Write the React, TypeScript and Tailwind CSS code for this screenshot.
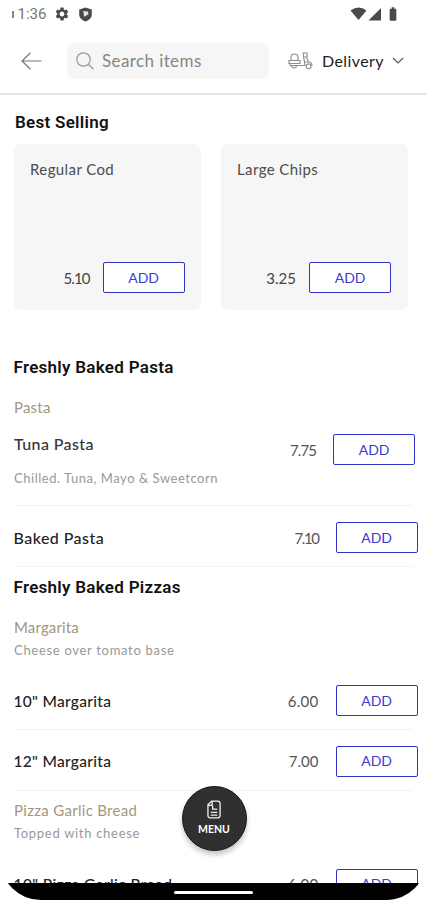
import React from "react";
import { MdSettings, MdBatteryFull } from "react-icons/md";

const AddButton = () => (
  <button className="flex h-[31px] w-[82px] shrink-0 items-center justify-center rounded-[2px] border-[1.5px] border-[#3032c8] bg-white text-[14px] leading-none tracking-[-0.1px] text-[#3a3cd0]">
    ADD
  </button>
);

const Card = ({ name, price, pad, priceClass }: { name: string; price: string; pad: string; priceClass: string }) => (
  <div className={`flex h-[166px] w-[187px] flex-col justify-between rounded-[7px] bg-[#f6f6f6] pt-[15px] pb-[17px] ${pad}`}>
    <div className="text-[15px] leading-[20px] tracking-[0.4px] text-[#4c4c4c]">{name}</div>
    <div className="flex items-center justify-end gap-[13px]">
      <span className={`text-[15px] leading-5 text-[#444] ${priceClass}`}>{price}</span>
      <AddButton />
    </div>
  </div>
);

const Heading = ({ children, className = "" }: { children: React.ReactNode; className?: string }) => (
  <h2 className={`font-['Roboto',sans-serif] text-[17px] leading-[20px] font-semibold tracking-[0.28px] text-[#111] ${className}`}>{children}</h2>
);

const Category = ({ children, className }: { children: React.ReactNode; className: string }) => (
  <h3 className={`text-[15px] leading-[20px] text-[#a3977b] ${className}`}>{children}</h3>
);

const Item = ({
  name,
  price,
  className,
  nameClass,
  priceClass = "",
}: {
  name: string;
  price: string;
  className: string;
  nameClass: string;
  priceClass?: string;
}) => (
  <div className={`ml-[13.500px] flex shrink-0 items-center ${className}`}>
    <span className={`flex-1 leading-5 font-medium text-[#222] ${nameClass}`}>{name}</span>
    <span className={`mr-[17px] text-[15px] leading-5 text-[#555] ${priceClass}`}>{price}</span>
    <AddButton />
  </div>
);

export default function App() {
  return (
    <div className="relative flex h-[900px] w-[427px] flex-col overflow-hidden rounded-b-[41px] bg-white font-['Lato',sans-serif]">
      <div className="flex h-7 shrink-0 items-center pl-[12px] font-['Roboto',sans-serif] text-[15px] text-[#777]">
        <span className="mr-[4px] h-[7px] w-[1.5px] bg-[#888]" />
        <span className="w-[29px]">1:36</span>
        <MdSettings className="ml-[7px] size-[16px] text-[#4a4a4a]" />
        <svg className="ml-[8px] size-[15px]" viewBox="0 0 15 15">
          <path d="M7.500 .5 13.800 2.500v5.100c0 3.400-2.500 5.700-6.300 7C3.700 13.300 1.200 11 1.200 7.600V2.500z" fill="#4a4a4a" />
          <path d="M5.300 4 9.800 4.600 10.500 7.200 6 9.800z" fill="#e5e5e5" />
        </svg>
        <svg className="ml-auto h-[14px] w-[35px]" viewBox="0 0 35 14">
          <path d="M.5 3.500Q8.500-2.500 16.500 3.500L8.500 13z" fill="#4a4a4a" />
          <path d="M18.500 13.500H31V1z" fill="#4a4a4a" />
        </svg>
        <MdBatteryFull className="mr-[26px] size-[16px] text-[#4a4a4a]" />
      </div>

      <header className="flex h-[67px] shrink-0 items-center border-b-2 border-[#e6e6e6] pl-[21px]">
        <svg className="h-[18px] w-[21px]" viewBox="0 0 21 18" fill="none" stroke="#777" strokeWidth="1.200">
          <path d="M20.500 9H1M9.500 .7 1 9l8.500 8.300" />
        </svg>
        <div className="ml-[25px] flex h-9 w-[202px] items-center rounded-[7px] bg-[#f6f6f6] pl-[9px]">
          <svg className="size-[18px]" viewBox="0 0 18 18" fill="none" stroke="#999" strokeWidth="1.200">
            <circle cx="7.500" cy="7.500" r="6.700" />
            <path d="m12.300 12.300 5.200 5" />
          </svg>
          <span className="ml-[8px] text-[17px] tracking-[0.4px] text-[#858585]">Search items</span>
        </div>
        <svg className="ml-[19px] h-[18px] w-[25px]" viewBox="0 0 25 18" fill="none" stroke="#8c8c8c" strokeWidth="1.100">
          <path d="M3 8V5.500Q3 2 6.500 2T10 5.500V8M1 8.500h11v3H1zM2 11.500v2h9M3.500 13.500a2.500 2.500 0 0 0 5 0M11 13.500h6L15 1h4v4h-3M18.500 5l2 5M17 10h4q3 0 3 4" />
          <circle cx="20.700" cy="14.300" r="2.400" />
        </svg>
        <span className="ml-[9px] text-[16px] tracking-[0.4px] text-[#222]">Delivery</span>
        <svg className="ml-[8px] h-[7px] w-[12px]" viewBox="0 0 12 7" fill="none" stroke="#555" strokeWidth="1.200">
          <path d="m1 1 5 5 5-5" />
        </svg>
      </header>

      <Heading className="mt-[17px] ml-[15px]">Best Selling</Heading>
      <div className="mt-[12px] ml-[13.500px] flex shrink-0 gap-[20px]">
        <Card name="Regular Cod" price="5.10" pad="pl-[16.500px] pr-[16px]" priceClass="tracking-[-0.9px]" />
        <Card name="Large Chips" price="3.25" pad="pl-[16.500px] pr-[16.500px]" priceClass="" />
      </div>

      <Heading className="mt-[47px] ml-[13.500px]">Freshly Baked Pasta</Heading>
      <Category className="mt-[20px] ml-[14px] tracking-[0.2px]">Pasta</Category>
      <div className="mr-[14px] ml-[14px] flex h-[89px] shrink-0 border-b border-[#f1f1f1] pt-[17px]">
        <div className="flex-1">
          <div className="text-[16px] leading-5 font-medium tracking-[0.4px] text-[#333]">Tuna Pasta</div>
          <div className="mt-[14px] text-[13px] leading-5 tracking-[0.53px] text-[#999]">Chilled. Tuna, Mayo &amp; Sweetcorn</div>
        </div>
        <div className="-mr-[2px] flex h-[31px] items-center gap-[17px]">
          <span className="text-[15px] leading-5 tracking-[-0.9px] text-[#555]">7.75</span>
          <AddButton />
        </div>
      </div>
      <Item name="Baked Pasta" price="7.10" className="mr-[9.500px] h-[60px] pt-[3px]" nameClass="text-[16px] tracking-[0.45px]" priceClass="tracking-[-1.400px]" />
      <div className="mx-[14px] h-px bg-[#f3f3f3]" />
      <Heading className="mt-[11px] ml-[13.500px]">Freshly Baked Pizzas</Heading>
      <Category className="mt-[20px] ml-[14px] tracking-[0.15px]">Margarita</Category>
      <div className="mt-[3px] ml-[14px] text-[13px] leading-5 tracking-[0.7px] text-[#999]">Cheese over tomato base</div>
      <Item name={'10" Margarita'} price="6.00" className="mt-[25px] mr-[9.500px] h-[31px]" nameClass="text-[15.500px] tracking-[0.300px]" priceClass="tracking-[0.3px]" />
      <div className="mx-[14px] mt-[13px] h-px bg-[#f1f1f1]" />
      <Item name={'12" Margarita'} price="7.00" className="mt-[16px] mr-[9.500px] h-[31px]" nameClass="text-[15.500px] tracking-[0.300px]" />
      <div className="mx-[14px] mt-[13px] h-px bg-[#f1f1f1]" />
      <Category className="mt-[10px] ml-[14px] tracking-[0.3px]">Pizza Garlic Bread</Category>
      <div className="mt-[3px] ml-[14px] text-[13px] leading-5 tracking-[0.7px] text-[#999]">Topped with cheese</div>
      <Item name={'10" Pizza Garlic Bread'} price="6.00" className="mt-[26px] mr-[9.500px] h-[31px]" nameClass="text-[15.500px] tracking-[0.400px]" priceClass="tracking-[0.3px]" />

      <button className="absolute top-[786px] left-[181.500px] flex size-[65px] flex-col items-center rounded-full border border-[#151515] bg-[#303030] pt-[13px] text-white shadow-[0_4px_5px_rgba(0,0,0,0.22)]">
        <svg className="h-[19px] w-[14px]" viewBox="0 0 15 20" fill="none" stroke="#eee" strokeWidth="1.400">
          <path d="M5 1h6.500Q14 1 14 3.500v13Q14 19 11.500 19h-8Q1 19 1 16.500V5zM5.500 1v4.500H1M6 6v3.500h5M4 13h7M4 16h7" />
        </svg>
        <span className="mt-[4px] text-[10.500px] leading-[12px] font-bold">MENU</span>
      </button>
      <div className="absolute inset-x-0 bottom-0 flex h-[17px] justify-center bg-black pt-[8px]">
        <span className="h-[3px] w-[79px] rounded-full bg-white" />
      </div>
    </div>
  );
}
